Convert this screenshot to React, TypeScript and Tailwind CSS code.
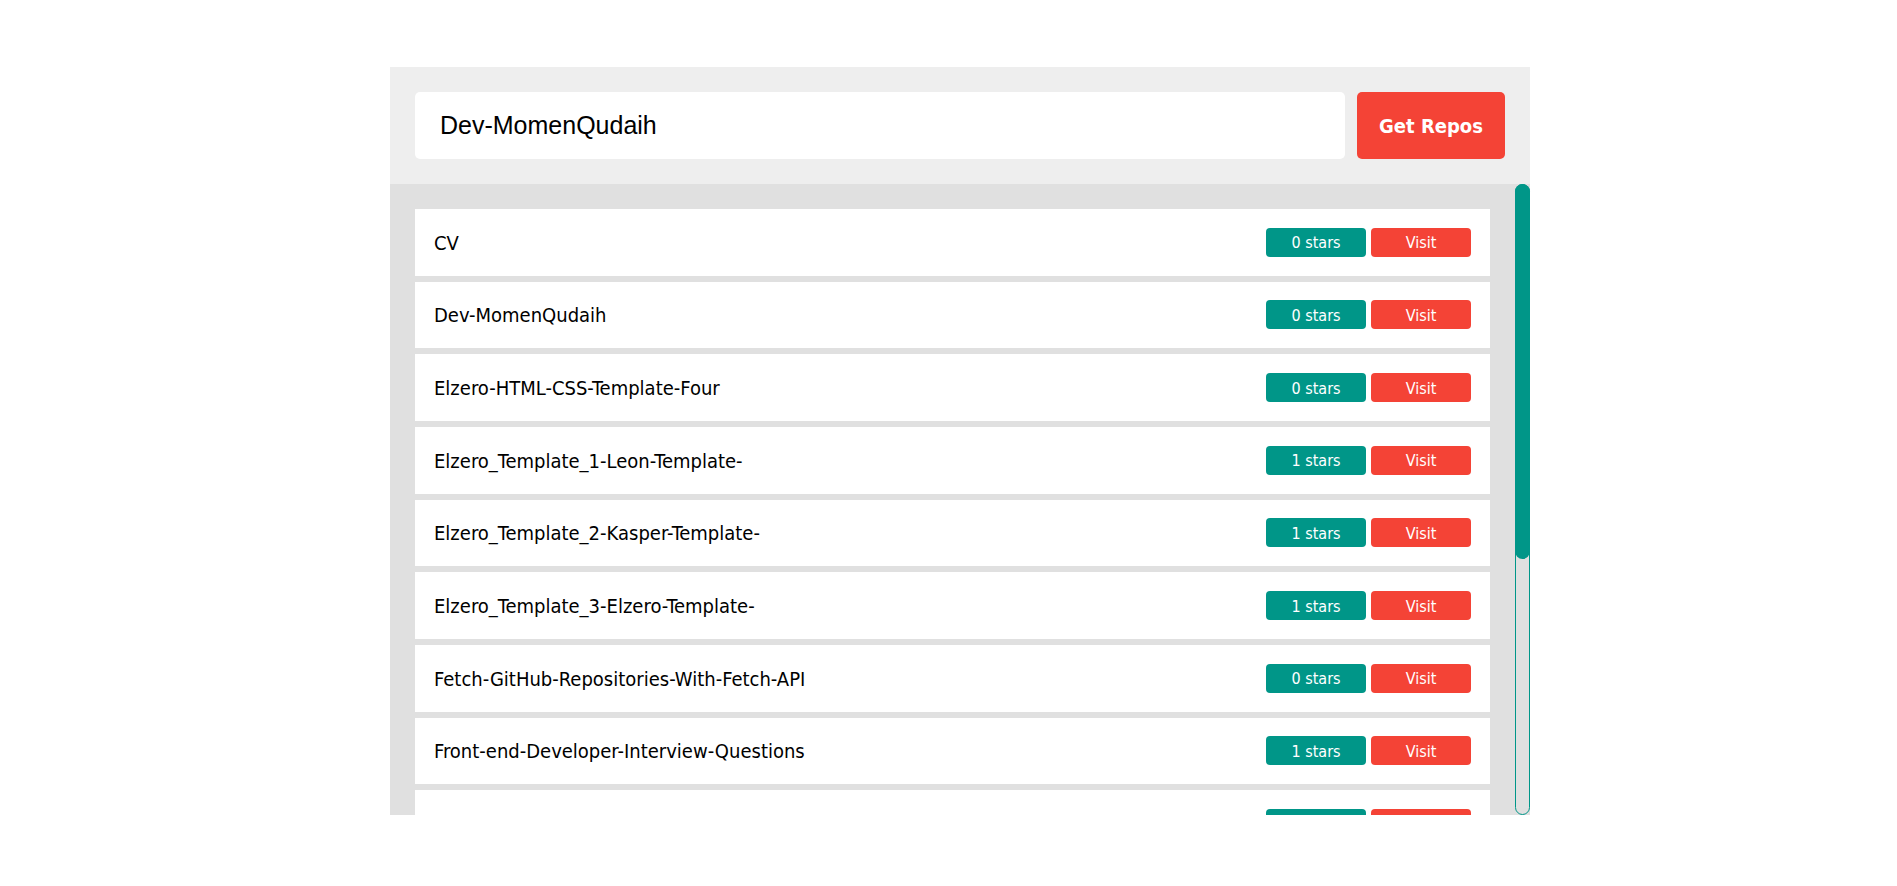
import React from 'react';

type Repo = { name: string; stars: number };

const repos: Repo[] = [
  { name: 'CV', stars: 0 },
  { name: 'Dev-MomenQudaih', stars: 0 },
  { name: 'Elzero-HTML-CSS-Template-Four', stars: 0 },
  { name: 'Elzero_Template_1-Leon-Template-', stars: 1 },
  { name: 'Elzero_Template_2-Kasper-Template-', stars: 1 },
  { name: 'Elzero_Template_3-Elzero-Template-', stars: 1 },
  { name: 'Fetch-GitHub-Repositories-With-Fetch-API', stars: 0 },
  { name: 'Front-end-Developer-Interview-Questions', stars: 1 },
  { name: 'Layout-Builder', stars: 0 },
  { name: 'Memory-Game', stars: 0 },
  { name: 'Password-Generator', stars: 0 },
  { name: 'Quiz-App', stars: 1 },
  { name: 'Todo-List', stars: 0 },
  { name: 'Weather-App', stars: 0 },
];

const body = "font-['DejaVu_Sans_Condensed','DejaVu_Sans',sans-serif]";

export default function App() {
  return (
    <main className="min-h-screen bg-white pt-[67px]">
      <div className={`ml-[390px] w-[1140px] ${body}`}>
        {/* Search bar */}
        <div className="flex gap-[12px] bg-[#eeeeee] p-[25px]">
          <input
            type="text"
            defaultValue="Dev-MomenQudaih"
            className="h-[67px] flex-1 rounded-[5px] bg-white pl-[25px] font-['Liberation_Sans',Arial,sans-serif] text-[25px] text-black outline-none"
          />
          <button className="h-[67px] w-[148px] rounded-[5px] bg-[#f44336] text-[20px] font-bold text-white">
            Get Repos
          </button>
        </div>

        {/* Repo list with its scrollbar */}
        <div className="flex h-[631px] bg-[#e0e0e0]">
          <div className="flex flex-1 flex-col gap-[6px] overflow-hidden p-[25px]">
            {repos.map((repo) => (
              <RepoRow key={repo.name} repo={repo} />
            ))}
          </div>
          <div className="flex w-[15px] flex-col rounded-full border border-[#009688]">
            <div className="-mx-px -mt-px h-[375px] rounded-full bg-[#009688]" />
          </div>
        </div>
      </div>
    </main>
  );
}

function RepoRow({ repo }: { repo: Repo }) {
  return (
    <div className="flex h-[66.67px] shrink-0 items-center justify-between bg-white px-[19px]">
      <span className="pt-[1px] text-[20px] text-black">{repo.name}</span>
      <div className="flex gap-[5px] text-[16px] text-white">
        <span className="flex h-[29px] w-[100px] items-center justify-center rounded-[4px] bg-[#009688] pt-[2px]">
          {repo.stars} stars
        </span>
        <a href="#" className="flex h-[29px] w-[100px] items-center justify-center rounded-[4px] bg-[#f44336] pt-[2px]">
          Visit
        </a>
      </div>
    </div>
  );
}
